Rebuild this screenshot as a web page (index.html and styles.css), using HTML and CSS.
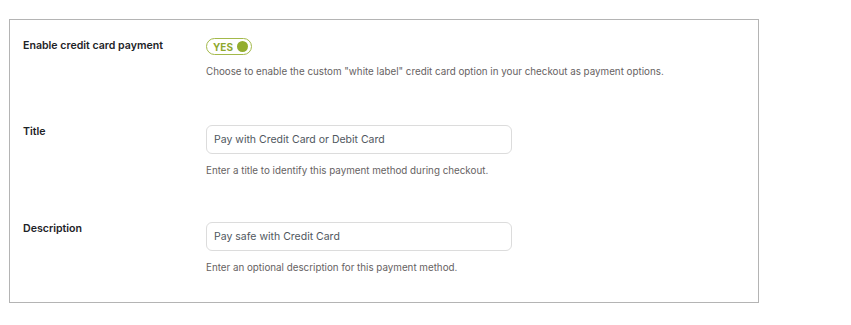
FILE: index.html
```html
<!DOCTYPE html>
<html lang="en">
<head>
<meta charset="utf-8">
<title>Credit card settings</title>
<link rel="stylesheet" href="styles.css">
</head>
<body>
<div class="panel">
  <div class="row row-first">
    <div class="label">Enable credit card payment</div>
    <div class="field">
      <span class="toggle"><span class="toggle-text">YES</span><span class="toggle-dot"></span></span>
      <p class="help">Choose to enable the custom "white label" credit card option in your checkout as payment options.</p>
    </div>
  </div>
  <div class="row row-second">
    <div class="label label-input">Title</div>
    <div class="field">
      <div class="input">Pay with Credit Card or Debit Card</div>
      <p class="help">Enter a title to identify this payment method during checkout.</p>
    </div>
  </div>
  <div class="row row-third">
    <div class="label label-input">Description</div>
    <div class="field">
      <div class="input">Pay safe with Credit Card</div>
      <p class="help">Enter an optional description for this payment method.</p>
    </div>
  </div>
</div>
</body>
</html>
```
FILE: styles.css
```css
html, body {
  margin: 0;
  padding: 0;
  background: #ffffff;
}
body {
  padding: 19px 0 0 9px;
  font-family: Inter, "Liberation Sans", Arial, sans-serif;
  color: #1d2327;
}
.panel {
  width: 735px;
  border: 1px solid #b4b4b4;
  padding: 18px 0 0 13px;
  box-sizing: content-box;
  height: 264px;
}
.row {
  display: grid;
  grid-template-columns: 183px 1fr;
}
.row-second {
  margin-top: 45px;
}
.row-third {
  margin-top: 43px;
}
.label {
  font-size: 10.6px;
  font-weight: 600;
  line-height: 16px;
  color: #1d2327;
  margin-top: 0;
}
.label-input {
  margin-top: -1px;
}
.field {
  display: flex;
  flex-direction: column;
  align-items: flex-start;
}
.toggle {
  display: inline-flex;
  align-items: center;
  height: 17px;
  width: 46px;
  box-sizing: border-box;
  border: 1px solid #a3b94a;
  border-radius: 9px;
  padding: 0 0 0 6px;
}
.toggle-text {
  font-size: 10px;
  font-weight: 700;
  color: #8fa82e;
  line-height: 1;
}
.toggle-dot {
  flex: 0 0 11px;
  width: 11px;
  height: 11px;
  margin-left: 4px;
  border-radius: 50%;
  background: #93ad2f;
}
.help {
  margin: 9px 0 0 0;
  font-size: 9.8px;
  line-height: 16px;
  color: #666262;
}
.input {
  width: 306px;
  height: 29px;
  box-sizing: border-box;
  border: 1px solid #dcdcdc;
  border-radius: 6px;
  padding: 0 7px;
  font-size: 10.5px;
  line-height: 27px;
  color: #50575e;
}
```
